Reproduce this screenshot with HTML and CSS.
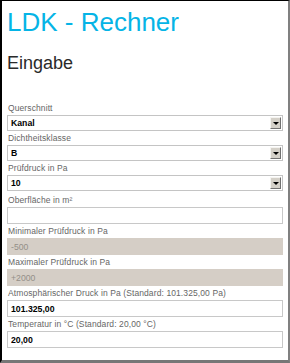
FILE: index.html
```html
<!DOCTYPE html>
<html lang="de">
<head>
  <meta charset="UTF-8">
  <meta name="viewport" content="width=device-width, initial-scale=1.0">
  <title>LDK - Rechner</title>
  <link rel="stylesheet" href="styles.css">
</head>
<body>
  <div class="frame">
    <h1 class="title">LDK - Rechner</h1>
    <h2 class="section-title">Eingabe</h2>

    <form class="calc-form">
      <label class="field-label" for="querschnitt">Querschnitt</label>
      <div class="select-box">
        <select id="querschnitt">
          <option>Kanal</option>
          <option>Rohr</option>
        </select>
        <span class="select-btn"><span class="arrow"></span></span>
      </div>

      <label class="field-label" for="klasse">Dichtheitsklasse</label>
      <div class="select-box">
        <select id="klasse">
          <option>B</option>
          <option>A</option>
          <option>C</option>
          <option>D</option>
        </select>
        <span class="select-btn"><span class="arrow"></span></span>
      </div>

      <label class="field-label" for="pruefdruck">Prüfdruck in Pa</label>
      <div class="select-box">
        <select id="pruefdruck">
          <option>10</option>
          <option>200</option>
          <option>400</option>
        </select>
        <span class="select-btn"><span class="arrow"></span></span>
      </div>

      <label class="field-label gap-top" for="oberflaeche">Oberfläche in m²</label>
      <input type="text" id="oberflaeche" class="text-input">

      <label class="field-label" for="min-druck">Minimaler Prüfdruck in Pa</label>
      <input type="text" id="min-druck" class="text-input disabled" value="-500" disabled>

      <label class="field-label" for="max-druck">Maximaler Prüfdruck in Pa</label>
      <input type="text" id="max-druck" class="text-input disabled" value="+2000" disabled>

      <label class="field-label" for="atmo">Atmosphärischer Druck in Pa (Standard: 101.325,00 Pa)</label>
      <input type="text" id="atmo" class="text-input" value="101.325,00">

      <label class="field-label" for="temp">Temperatur in °C (Standard: 20,00 °C)</label>
      <input type="text" id="temp" class="text-input" value="20,00">
    </form>
  </div>
</body>
</html>
```

FILE: styles.css
```css
* {
  margin: 0;
  padding: 0;
  box-sizing: border-box;
  font-family: 'Liberation Sans', Arial, sans-serif;
}

body {
  background-color: #ffffff;
}

/* window frame */
.frame {
  height: 100vh;
  border-top: 1px solid #000000;
  border-left: 2px solid #000000;
  border-right: 2px solid #808080;
  border-bottom: 3px solid #777777;
  padding: 6px 5px 0 5px;
  overflow: hidden;
}

.title {
  font-size: 26px;
  line-height: 30px;
  font-weight: normal;
  color: #05b4e6;
}

.section-title {
  font-size: 18px;
  line-height: 22px;
  font-weight: normal;
  color: #2a2a2a;
  margin-top: 15px;
  margin-bottom: 27px;
}

.calc-form {
  display: flex;
  flex-direction: column;
}

.field-label {
  display: block;
  font-size: 8.5px;
  line-height: 14px;
  letter-spacing: 0.1px;
  color: #666666;
  padding-left: 1px;
}

.field-label.gap-top {
  margin-top: 2px;
}

/* select with classic dropdown button */
.select-box {
  display: flex;
  height: 16px;
  border: 1px solid #c4c4c4;
  background-color: #ffffff;
  padding: 1px;
}

.select-box select {
  flex: 1;
  appearance: none;
  -webkit-appearance: none;
  border: none;
  outline: none;
  background: transparent;
  font-size: 8.7px;
  font-weight: bold;
  color: #000000;
  padding-left: 2px;
}

.select-btn {
  width: 11px;
  display: flex;
  align-items: center;
  justify-content: center;
  background-color: #d4d0c8;
  border-top: 1px solid #f4f3f0;
  border-left: 1px solid #f4f3f0;
  border-right: 1px solid #707070;
  border-bottom: 1px solid #707070;
}

.arrow {
  width: 0;
  height: 0;
  border-left: 3px solid transparent;
  border-right: 3px solid transparent;
  border-top: 3px solid #000000;
}

.text-input {
  height: 17px;
  border: 1px solid #c8c8c8;
  background-color: #ffffff;
  outline: none;
  font-size: 8.7px;
  font-weight: bold;
  color: #000000;
  padding: 0 3px;
}

.text-input.disabled {
  background-color: #d5cec6;
  border-color: #d5cec6;
  font-weight: normal;
  color: #948e88;
}
```
